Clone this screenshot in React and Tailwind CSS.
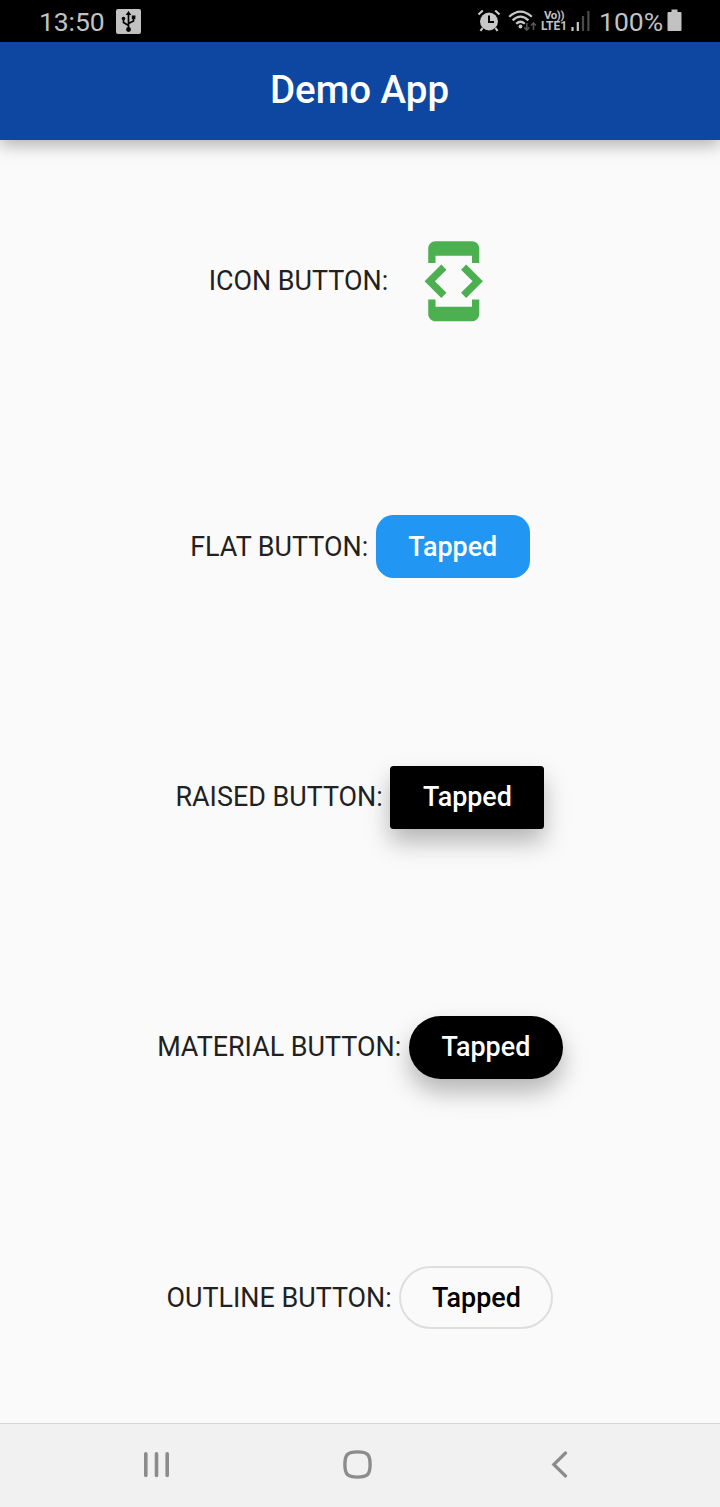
import React from "react";

function UsbIcon() {
  return (
    <svg width="25" height="25" viewBox="0 0 25 25" className="shrink-0">
      <rect width="25" height="25" rx="2" fill="#c2c2c2" />
      <g stroke="#000" strokeWidth="1.7" fill="none">
        <path d="M12.5 4.500V20M12.500 16.500L7.500 13.500V9M12.500 14.500L17.500 12V8.500" />
      </g>
      <path d="M12.500 2L15.300 6H9.700z" />
      <circle cx="12.500" cy="20.500" r="2.400" />
      <circle cx="7.500" cy="9.500" r="1.800" />
      <rect x="15.800" y="6.500" width="3.600" height="3.600" />
    </svg>
  );
}

function AlarmIcon() {
  return (
    <svg width="24" height="24" viewBox="0 0 24 24" className="shrink-0">
      <circle cx="12" cy="12.500" r="9" fill="#c8c8c8" />
      <path d="M1.500 5.500L5.800 1.500M22.500 5.500L18.200 1.500M5.500 19L3.500 22M18.500 19L20.500 22" stroke="#c8c8c8" strokeWidth="2.200" />
      <path d="M12 6.500V13H17" stroke="#000" strokeWidth="2" fill="none" />
    </svg>
  );
}

function WifiIcon() {
  return (
    <svg width="30" height="24" viewBox="0 0 30 24" className="shrink-0">
      <g stroke="#c8c8c8" strokeWidth="2.200" fill="none">
        <path d="M1.200 7.800Q12.500 -2.600 23.800 7.800" />
        <path d="M4.600 11.400Q12.500 4 20.400 11.400" />
        <path d="M8.200 14.700Q12.500 10.800 16.800 14.700" />
      </g>
      <circle cx="12.500" cy="17.500" r="1.900" fill="#c8c8c8" />
      <path d="M18.800 14V21M16.300 18.400L18.800 21L21.300 18.400M25.500 21V14M23 16.500L25.500 14L28 16.500" stroke="#555" strokeWidth="1.600" fill="none" />
    </svg>
  );
}

function StatusBar() {
  return (
    <div className="flex h-[42px] shrink-0 items-center bg-black pr-[38px] pl-[39px] text-[#c2c2c2]">
      <span className="w-[77px] pt-[2px] text-[26.500px] leading-[30px] tracking-[-0.100px]">13:50</span>
      <UsbIcon />
      <div className="ml-auto flex items-center">
        <AlarmIcon />
        <div className="ml-[7px] flex">
          <WifiIcon />
        </div>
        <div className="ml-[2px] flex w-[28px] flex-col items-center text-[12px] leading-[11.500px] font-bold">
          <span className="text-[11.500px] tracking-[-0.400px]">Vo))</span>
          <span>LTE1</span>
        </div>
        <svg width="19" height="22" viewBox="0 0 19 22" className="ml-[3px]">
          <path d="M1.500 17V21M6.800 12V21" stroke="#c8c8c8" strokeWidth="2.200" />
          <path d="M12 6V21M17.400 1V21" stroke="#4b4b4b" strokeWidth="2.200" />
        </svg>
        <span className="ml-[9px] w-[68px] pt-[2px] text-[26.500px] leading-[30px]">100%</span>
        <svg width="15" height="23" viewBox="0 0 15 23" className="mb-px">
          <path d="M4.500 0.500H10.500V3H13.500Q14.500 3 14.500 4V21Q14.500 22 13.500 22H1.500Q0.500 22 0.500 21V4Q0.500 3 1.500 3H4.500z" fill="#c2c2c2" />
        </svg>
      </div>
    </div>
  );
}

function Row({ label, className, labelClassName = "", children }) {
  return (
    <div className={"flex items-center justify-center " + className}>
      <span className={"pr-px text-[26.900px] leading-[32px] whitespace-pre text-[#212121] " + labelClassName}>
        {label + " "}
      </span>
      {children}
    </div>
  );
}

function Button({ className }) {
  return (
    <button className={"h-[63px] w-[154px] shrink-0 text-[26.900px] leading-[32px] font-medium " + className}>
      Tapped
    </button>
  );
}

export default function App() {
  return (
    <div className="flex h-[1507px] w-[720px] flex-col overflow-hidden bg-[#fafafa] font-[Roboto,sans-serif]">
      <StatusBar />
      <header className="z-10 flex h-[98px] shrink-0 items-center justify-center bg-[#0d47a1] pr-px pb-[4px] shadow-[0_5px_16px_rgba(0,0,0,0.3)]">
        <h1 className="text-[38.500px] leading-[45px] font-medium text-white">Demo App</h1>
      </header>
      <main className="flex flex-1 flex-col justify-around">
        <Row label="ICON BUTTON:" className="h-[115.500px]">
          <button className="p-[14px]">
            <svg width="87.500" height="87.500" viewBox="0 0 24 24" fill="#4caf50" className="block">
              <path transform="translate(0 0.14)" d="M7 5h10v2h2V3c0-1.100-.9-1.990-2-1.990L7 1c-1.100 0-2 .9-2 2v4h2V5zm8.410 11.590L20 12l-4.590-4.590L14 8.830 17.170 12 14 15.170l1.410 1.420zM10 15.170L6.830 12 10 8.830 8.590 7.410 4 12l4.590 4.590L10 15.170zM17 19H7v-2H5v4c0 1.100.9 2 2 2h10c1.100 0 2-.9 2-2v-4h-2v2z" />
            </svg>
          </button>
        </Row>
        <Row label="FLAT BUTTON:" className="h-[84px]">
          <Button className="rounded-[17.500px] bg-[#2196f3] text-white" />
        </Row>
        <Row label="RAISED BUTTON:" className="h-[84px]">
          <Button className="rounded-[3.500px] bg-black text-white shadow-[0_13px_24px_rgba(0,0,0,0.28)]" />
        </Row>
        <Row label="MATERIAL BUTTON:" className="h-[84px]" labelClassName="pb-px">
          <Button className="rounded-full bg-black pb-px text-white shadow-[0_13px_24px_rgba(0,0,0,0.28)]" />
        </Row>
        <Row label="OUTLINE BUTTON:" className="h-[84px]">
          <Button className="rounded-full border-2 border-[#dedede] text-black" />
        </Row>
      </main>
      <nav className="flex h-[84px] shrink-0 items-center border-t border-[#d5d5d5] bg-[#f1f1f1] pb-[2px] pl-[143px]">
        <svg width="27" height="28" viewBox="0 0 27 28" stroke="#8c8c8c" strokeWidth="3.600" strokeLinecap="round">
          <path d="M2.800 2.800V24.500M13.500 2.800V24.500M24.200 2.800V24.500" />
        </svg>
        <svg width="30" height="30" viewBox="0 0 30 30" className="ml-[173px]" fill="none" stroke="#8c8c8c" strokeWidth="3.400">
          <path d="M14.500 1.900C24.500 1.900 27.100 4.500 27.100 14.500S24.500 27.100 14.500 27.100 1.900 24.500 1.900 14.500 4.500 1.900 14.500 1.900z" />
        </svg>
        <svg width="18" height="28" viewBox="0 0 18 28" className="ml-[178px]" fill="none" stroke="#8c8c8c" strokeWidth="3.200" strokeLinecap="round">
          <path d="M14.500 2L2.800 13.500L14.500 25" />
        </svg>
      </nav>
    </div>
  );
}
